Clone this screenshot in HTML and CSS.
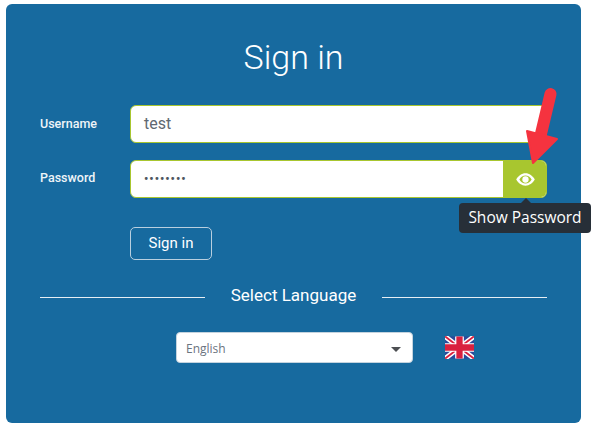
FILE: index.html
```html
<!DOCTYPE html>
<html lang="en">
<head>
<meta charset="utf-8">
<title>Sign in</title>
<link rel="stylesheet" href="styles.css">
</head>
<body>
<main class="card">
  <h1 class="title">Sign in</h1>
  <div class="row row-user">
    <label class="label">Username</label>
    <div class="field"><span class="value">test</span></div>
  </div>
  <div class="row row-pass">
    <label class="label">Password</label>
    <div class="field field-group">
      <span class="value dots">&#8226;&#8226;&#8226;&#8226;&#8226;&#8226;&#8226;&#8226;</span>
      <span class="eye-btn">
        <svg class="eye" viewBox="0 0 20 14" width="19" height="13"><path fill="#fff" fill-rule="evenodd" d="M10 .4C5.800.4 2.200 3.200 0 7c2.200 3.800 5.800 6.600 10 6.600s7.800-2.800 10-6.600C17.800 3.200 14.200.4 10 .4zm0 10.900C7.400 11.300 4.900 9.800 3.400 7 4.900 4.200 7.400 2.700 10 2.700s5.100 1.500 6.600 4.300c-1.500 2.800-4 4.300-6.600 4.300z"/><circle cx="10" cy="7" r="3.400" fill="#fff"/></svg>
      </span>
    </div>
  </div>
  <div class="actions"><button class="signin">Sign in</button></div>
  <div class="divider"><span class="line"></span><span class="divider-text">Select Language</span><span class="line"></span></div>
  <div class="lang">
    <div class="select"><span class="select-text">English</span><span class="caret"></span></div>
    <svg class="flag" viewBox="0 0 60 46" width="29" height="23">
      <rect width="60" height="46" fill="#2b4a9b"/>
      <path d="M0 0L60 46M60 0L0 46" stroke="#fff" stroke-width="10"/>
      <path d="M0 0L60 46M60 0L0 46" stroke="#d9213f" stroke-width="4"/>
      <path d="M30 0V46M0 23H60" stroke="#fff" stroke-width="18"/>
      <path d="M30 0V46M0 23H60" stroke="#d9213f" stroke-width="13"/>
    </svg>
  </div>
</main>
<div class="tooltip"><span class="tip-arrow"></span>Show Password</div>
<svg class="arrow" viewBox="0 0 40 90" width="40" height="90">
  <path d="M28.500 10L18 54" stroke="#f5333f" stroke-width="12" stroke-linecap="round" fill="none"/>
  <path d="M5 47L35 55L11 79Z" fill="#f5333f" stroke="#f5333f" stroke-width="2" stroke-linejoin="round"/>
</svg>
</body>
</html>
```
FILE: styles.css
```css
* { box-sizing: border-box; }
html, body { margin: 0; height: 100%; background: #fff; }
body { padding: 4px 0 0 6px; font-family: Roboto, sans-serif; overflow: hidden; }
.card {
  width: 575px; height: 419px; background: #176a9f; border-radius: 6px;
  padding: 32px 34px 0; color: #fff;
}
.title { margin: 0; font-size: 34px; font-weight: 300; line-height: 42px; text-align: center; }
.row { display: flex; align-items: center; height: 38px; }
.row-user { margin-top: 27px; }
.row-pass { margin-top: 17px; }
.label { width: 90px; font-size: 12.500px; font-weight: 500; color: #eef4f8; padding-bottom: 3px; }
.row-user .label { padding-bottom: 2px; }
.field {
  flex: 1; height: 38px; background: #fff; border: 1px solid #a8c62f; border-radius: 6px;
  display: flex; align-items: center; padding-left: 13px; overflow: hidden;
}
.value { font-size: 16px; color: #5f6871; padding-bottom: 2px; }
.dots { font-size: 12px; letter-spacing: 1px; flex: 1; color: #4e5660; font-weight: 700; padding-bottom: 1px; }
.field-group { padding-right: 0; }
.eye-btn { width: 43px; height: 38px; background: #a8c62f; display: flex; align-items: center; justify-content: center; padding-left: 2px; }
.actions { margin: 29px 0 0 90px; }
.signin {
  display: block; width: 82px; height: 33px; background: transparent; color: #fff;
  border: 1px solid #b9cfdf; border-radius: 5px; font: 400 15px Roboto, sans-serif; padding: 0 0 2px;
}
.divider { display: flex; align-items: center; justify-content: space-between; margin-top: 24px; height: 22px; }
.line { width: 165px; height: 1px; background: #e6eef4; margin-top: 5px; }
.divider-text { font-size: 17px; font-weight: 400; }
.lang { display: flex; align-items: center; margin: 26px 0 0 136px; gap: 32px; }
.select {
  width: 237px; height: 31px; background: #fff; border: 1px solid #c4d3de; border-radius: 4px;
  display: flex; align-items: center; justify-content: space-between; padding: 0 11px 0 9px;
  font-family: "Open Sans", sans-serif; font-size: 12px; color: #6b7480;
}
.select-text { padding-top: 1px; }
.caret { width: 0; height: 0; border: 5px solid transparent; border-top: 5px solid #4c4f52; border-bottom: 0; margin-top: 4px; }
.flag { display: block; }
.tooltip {
  position: absolute; left: 459px; top: 203px; width: 132px; height: 30px; background: #272f38; color: #fff;
  border-radius: 4px; font-family: "Open Sans", sans-serif; font-size: 15.500px; line-height: 29px; text-align: center;
}
.tip-arrow {
  position: absolute; left: 62px; top: -5px; width: 0; height: 0;
  border: 5px solid transparent; border-bottom: 5px solid #272f38; border-top: 0;
}
.arrow { position: absolute; left: 522px; top: 84px; }
```
